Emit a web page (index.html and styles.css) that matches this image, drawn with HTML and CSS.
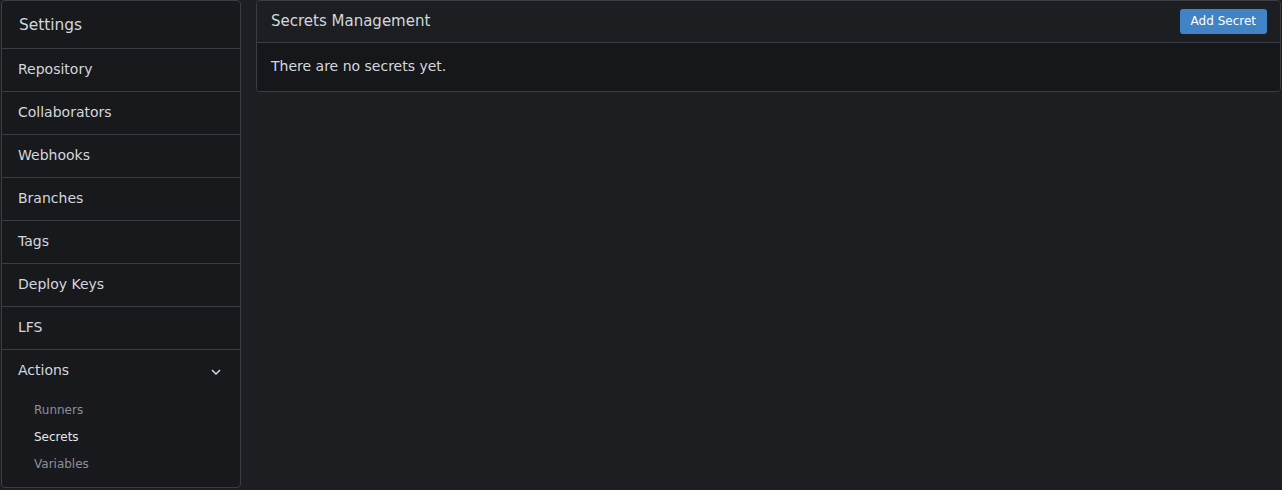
FILE: index.html
```html
<!DOCTYPE html>
<html>
<head>
<meta charset="utf-8">
<link rel="stylesheet" href="styles.css">
</head>
<body>
<div class="page">
  <nav class="sidebar">
    <div class="side-header">Settings</div>
    <a class="side-item">Repository</a>
    <a class="side-item">Collaborators</a>
    <a class="side-item">Webhooks</a>
    <a class="side-item">Branches</a>
    <a class="side-item">Tags</a>
    <a class="side-item">Deploy Keys</a>
    <a class="side-item">LFS</a>
    <div class="side-group">
      <div class="group-title">
        <span>Actions</span>
        <svg class="chevron" width="10" height="6" viewBox="0 0 10 6"><path d="M1 1l4 4 4-4" fill="none" stroke="currentColor" stroke-width="1.5"/></svg>
      </div>
      <div class="group-items">
        <a class="sub-item">Runners</a>
        <a class="sub-item active">Secrets</a>
        <a class="sub-item">Variables</a>
      </div>
    </div>
  </nav>
  <main class="main">
    <section class="box">
      <div class="box-header">
        <span class="box-title">Secrets Management</span>
        <button class="btn-primary">Add Secret</button>
      </div>
      <div class="box-body">There are no secrets yet.</div>
    </section>
  </main>
</div>
</body>
</html>
```
FILE: styles.css
```css
html, body {
  margin: 0;
  padding: 0;
  background: #1c1e22;
  color: #d4d7dd;
  font-family: "DejaVu Sans", sans-serif;
  font-size: 14px;
}
.page {
  display: flex;
  align-items: flex-start;
  gap: 15px;
  padding: 0 1px;
  height: 490px;
  overflow: hidden;
}
.sidebar {
  width: 240px;
  flex: none;
  box-sizing: border-box;
  border: 1px solid #3a3d44;
  border-radius: 4px;
  background: #18191d;
  display: flex;
  flex-direction: column;
}
.side-header {
  height: 48px;
  box-sizing: border-box;
  padding: 0 17px;
  display: flex;
  align-items: center;
  font-size: 15.4px;
  color: #d4d7dd;
  border-bottom: 1px solid #3a3d44;
}
.side-item {
  height: 43px;
  box-sizing: border-box;
  padding: 0 16px 2px;
  display: flex;
  align-items: center;
  border-bottom: 1px solid #3a3d44;
  color: #d4d7dd;
}
.group-title {
  height: 42px;
  box-sizing: border-box;
  padding: 0 16px 2px;
  display: flex;
  align-items: center;
  justify-content: space-between;
}
.chevron {
  color: #d4d7dd;
  margin-right: 3px;
  margin-top: 4px;
}
.group-items {
  display: flex;
  flex-direction: column;
  padding: 4px 0 10px;
}
.sub-item {
  height: 27px;
  padding-left: 32px;
  display: flex;
  align-items: center;
  font-size: 12px;
  color: #8d9099;
}
.sub-item.active {
  color: #e4e6ea;
}
.main {
  flex: 1;
  min-width: 0;
}
.box {
  border: 1px solid #3a3d44;
  border-radius: 4px;
  overflow: hidden;
}
.box-header {
  height: 42px;
  box-sizing: border-box;
  padding: 0 13px 0 14px;
  display: flex;
  align-items: center;
  justify-content: space-between;
  background: #1c1e22;
  border-bottom: 1px solid #3a3d44;
}
.box-title {
  font-size: 15px;
  color: #d4d7dd;
  margin-top: -1px;
}
.btn-primary {
  height: 25px;
  padding: 0 11px;
  border: none;
  border-radius: 3px;
  background: #4183c4;
  color: #ffffff;
  font-family: "DejaVu Sans", sans-serif;
  font-size: 12px;
  margin-top: -1px;
}
.box-body {
  height: 48px;
  box-sizing: border-box;
  padding: 0 14px 2px;
  display: flex;
  align-items: center;
  background: #16171a;
  color: #d4d7dd;
}
```
